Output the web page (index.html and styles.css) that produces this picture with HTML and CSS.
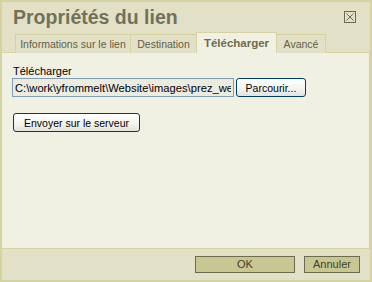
FILE: index.html
```html
<!DOCTYPE html>
<html lang="fr">
<head>
    <meta charset="UTF-8">
    <title>Propriétés du lien</title>
    <link rel="stylesheet" href="styles.css">
</head>
<body>
    <div class="dialog">
        <div class="header">
            <div class="title-row">
                <h1>Propriétés du lien</h1>
                <span class="close">
                    <svg width="12" height="12" viewBox="0 0 12 12">
                        <rect x="0.5" y="0.5" width="11" height="11" fill="none" stroke="#6b6b52"/>
                        <path d="M2.5 2.5 L9.5 9.5 M9.5 2.5 L2.5 9.5" stroke="#6b6b52" stroke-width="1"/>
                    </svg>
                </span>
            </div>
            <div class="tabs">
                <div class="tab tab-info">Informations sur le lien</div>
                <div class="tab tab-dest">Destination</div>
                <div class="tab tab-upload active">Télécharger</div>
                <div class="tab tab-adv">Avancé</div>
            </div>
        </div>

        <div class="panel">
            <label for="file">Télécharger</label>
            <div class="file-row">
                <input type="text" id="file" value="C:\work\yfrommelt\Website\images\prez_web.jpg">
                <button class="xp-btn browse">Parcourir...</button>
            </div>
            <button class="xp-btn send">Envoyer sur le serveur</button>
        </div>

        <div class="footer">
            <button class="btn ok">OK</button>
            <button class="btn cancel">Annuler</button>
        </div>
    </div>
</body>
</html>
```

FILE: styles.css
```css
body {
    margin: 0;
    padding: 0;
    font-family: "Liberation Sans", Arial, sans-serif;
    font-size: 10.5px;
    color: #000;
}

.dialog {
    width: 372px;
    height: 282px;
    box-sizing: border-box;
    border: 2px solid #d5d39f;
    background-color: #e2e1c7;
    display: flex;
    flex-direction: column;
}

.header {
    height: 50px;
    padding-top: 3px;
    box-sizing: border-box;
    display: flex;
    flex-direction: column;
}

.title-row {
    display: flex;
    justify-content: space-between;
    align-items: flex-start;
    padding-left: 11px;
    padding-right: 14px;
}

h1 {
    margin: 0;
    font-size: 19.5px;
    line-height: 24px;
    font-weight: bold;
    color: #72725a;
}

.close {
    margin-top: 6px;
    width: 12px;
    height: 12px;
    display: block;
}

.close svg {
    display: block;
}

.tabs {
    display: flex;
    align-items: flex-end;
    padding-left: 13px;
    margin-top: auto;
    margin-bottom: -1px;
    position: relative;
    z-index: 1;
}

.tab {
    height: 19px;
    line-height: 18px;
    box-sizing: border-box;
    text-align: center;
    white-space: nowrap;
    border: 1px solid #d5d39f;
    border-bottom: none;
    margin-right: -1px;
    color: #5f5f48;
    background-color: #e2e1c7;
}

.tab-info { width: 116px; }
.tab-dest { width: 67px; }
.tab-upload { width: 81px; }
.tab-adv { width: 50px; }

.tab.active {
    height: 21px;
    line-height: 21px;
    font-size: 11.5px;
    font-weight: bold;
    color: #6c6c50;
    background-color: #f0f0e3;
}

.panel {
    height: 197px;
    box-sizing: border-box;
    background-color: #f0f0e3;
    border-top: 1px solid #d5d39f;
    border-right: 1px solid #d5d39f;
    border-bottom: 1px solid #d5d39f;
    padding: 11px 10px 0 10px;
}

label {
    display: block;
    line-height: 14px;
    font-size: 11px;
    padding-left: 1px;
}

.file-row {
    display: flex;
    gap: 2px;
}

input {
    width: 222px;
    height: 19px;
    box-sizing: border-box;
    border: 1px solid #7f9db9;
    background-color: #ecebe0;
    font-family: inherit;
    font-size: 11.2px;
    padding: 0 2px;
    margin: 0;
    outline: none;
}

.xp-btn {
    height: 19px;
    box-sizing: border-box;
    border: 1px solid #003c74;
    border-radius: 3px;
    background: linear-gradient(#ffffff, #f3f3ee 60%, #e3e2da);
    font-family: inherit;
    font-size: 10.5px;
    white-space: nowrap;
    color: #000;
    padding: 0;
    margin: 0;
}

.browse {
    width: 70px;
}

.send {
    display: block;
    width: 127px;
    margin-top: 16px;
    margin-left: 1px;
}

.footer {
    flex: 1;
    display: flex;
    justify-content: flex-end;
    align-items: center;
    gap: 9px;
    padding-right: 10px;
}

.btn {
    height: 17px;
    box-sizing: border-box;
    border: 1px solid #6b6b52;
    background-color: #c9c791;
    font-family: inherit;
    font-size: 11px;
    line-height: 15px;
    color: #3f3f30;
    padding: 0;
    margin: 0;
}

.ok {
    width: 100px;
}

.cancel {
    width: 56px;
}
```
